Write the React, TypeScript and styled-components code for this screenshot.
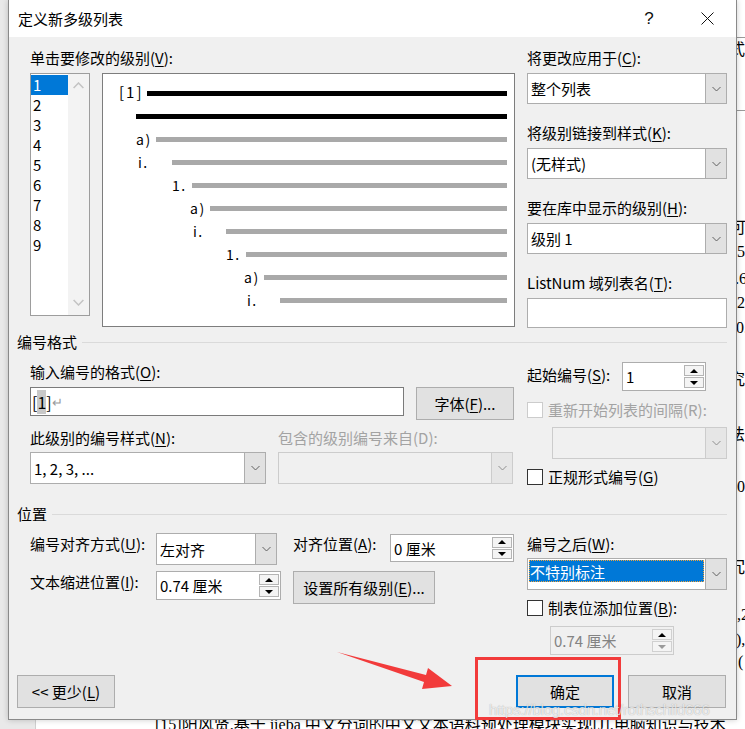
import React from "react";
import styled, { createGlobalStyle, css } from "styled-components";

const UI_FONT = `"Noto Sans CJK SC", "Noto Sans", sans-serif`;

const GlobalStyle = createGlobalStyle`
  html, body {
    margin: 0;
    padding: 0;
    background: #fff;
  }
  body {
    font-family: ${UI_FONT};
  }
`;

const Screen = styled.div`
  position: relative;
  width: 745px;
  height: 729px;
  overflow: hidden;
  background: #fff;
`;

/* ---------- the Word document behind the dialog ---------- */

const Backdrop = styled.div`
  position: absolute;
  inset: 0;
  display: flex;
`;

const Gutter = styled.div`
  width: 35px;
  flex-shrink: 0;
  background: #e9e9e9;
  border-right: 1px solid #cfcfcf;
`;

const Page = styled.div`
  flex: 1;
  display: flex;
  flex-direction: column;
  font-family: "Liberation Serif", "Noto Sans CJK SC", serif;
  font-size: 16px;
  color: #000;
`;

const EdgeNotes = styled.div`
  flex: 1;
  display: flex;
  flex-direction: column;
`;

const EdgeNote = styled.div<{ $x: number; $gap: number }>`
  margin-left: ${(p) => p.$x - 36}px;
  margin-top: ${(p) => p.$gap}px;
  height: 20px;
  line-height: 20px;
  white-space: nowrap;
`;

const EdgeRule = styled.div<{ $gap: number }>`
  margin-top: ${(p) => p.$gap}px;
  height: 1px;
  background: #9a9a9a;
`;

const RefLine = styled.div`
  padding-left: 119px;
  height: 20px;
  line-height: 20px;
  margin-bottom: -6px;
  white-space: nowrap;
`;

/* ---------- dialog frame ---------- */

const Dialog = styled.div`
  position: absolute;
  left: 8px;
  top: 0;
  width: 729px;
  height: 720px;
  box-sizing: border-box;
  border: 1px solid #8a8a8a;
  border-top: none;
  background: #f0f0f0;
  display: flex;
  flex-direction: column;
  box-shadow: 0 0 6px rgba(0, 0, 0, 0.2);
  color: #000;
  font-size: 15px;
`;

const TitleBar = styled.div`
  height: 37px;
  background: #fff;
  display: flex;
  align-items: center;
`;

const Title = styled.div`
  flex: 1;
  padding-left: 9px;
  font-size: 15px;
  line-height: 20px;
`;

const CaptionButton = styled.div`
  width: 58px;
  height: 37px;
  display: flex;
  align-items: center;
  justify-content: center;
  font-family: "Liberation Sans", sans-serif;
  font-size: 17px;
  color: #111;
`;

const Body = styled.div`
  flex: 1;
  display: flex;
  flex-direction: column;
  padding: 0 9px 11px 8px;
`;

/* ---------- generic controls ---------- */

const Label = styled.div<{ $disabled?: boolean; $mt?: number; $w?: number }>`
  height: 20px;
  line-height: 20px;
  font-size: 15px;
  white-space: nowrap;
  color: ${(p) => (p.$disabled ? "#a3a3a3" : "#000")};
  margin-top: ${(p) => p.$mt ?? 0}px;
  ${(p) => p.$w && css`width: ${p.$w}px; flex-shrink: 0;`}
`;

const Key = styled.span`
  text-decoration: underline;
  text-underline-offset: 2px;
  text-decoration-thickness: 1px;
`;

const Stack = styled.div<{ $w?: number; $gap?: number; $mt?: number }>`
  display: flex;
  flex-direction: column;
  gap: ${(p) => p.$gap ?? 0}px;
  margin-top: ${(p) => p.$mt ?? 0}px;
  ${(p) => p.$w && css`width: ${p.$w}px; flex-shrink: 0;`}
`;

const Row = styled.div<{ $gap?: number; $mt?: number; $align?: string }>`
  display: flex;
  align-items: ${(p) => p.$align ?? "flex-start"};
  gap: ${(p) => p.$gap ?? 0}px;
  margin-top: ${(p) => p.$mt ?? 0}px;
`;

const ComboBox = styled.div<{
  $w: number;
  $h: number;
  $disabled?: boolean;
  $mt?: number;
  $ml?: number;
}>`
  display: flex;
  box-sizing: border-box;
  width: ${(p) => p.$w}px;
  height: ${(p) => p.$h}px;
  flex-shrink: 0;
  margin-top: ${(p) => p.$mt ?? 0}px;
  margin-left: ${(p) => p.$ml ?? 0}px;
  border: 1px solid ${(p) => (p.$disabled ? "#cccccc" : "#adadad")};
  background: ${(p) => (p.$disabled ? "#f0f0f0" : "#fff")};
`;

const ComboValue = styled.div<{ $selected?: boolean }>`
  flex: 1;
  display: flex;
  align-items: center;
  padding-left: 3px;
  font-size: 15px;
  white-space: nowrap;
  ${(p) =>
    p.$selected &&
    css`
      align-self: flex-start;
      height: 22px;
      margin: 1px 1px 0 1px;
      padding-left: 1px;
      background: #0078d7;
      color: #fff;
      outline: 1px dotted #f3a43a;
      outline-offset: -1px;
    `}
`;

const DropButton = styled.div<{ $disabled?: boolean }>`
  width: 20px;
  display: flex;
  align-items: center;
  justify-content: center;
  background: ${(p) => (p.$disabled ? "#e6e6e6" : "#e1e1e1")};
  border-left: 1px solid ${(p) => (p.$disabled ? "#cccccc" : "#adadad")};
`;

const TextBox = styled.div<{ $w: number; $h: number; $dark?: boolean }>`
  box-sizing: border-box;
  width: ${(p) => p.$w}px;
  height: ${(p) => p.$h}px;
  flex-shrink: 0;
  background: #fff;
  border: 1px solid ${(p) => (p.$dark ? "#7a7a7a" : "#adadad")};
  display: flex;
  align-items: center;
  padding-left: 1px;
  font-size: 16px;
`;

const Mark = styled.span`
  background: #c8c8c8;
`;

const ReturnMark = styled.span`
  color: #9a9a9a;
  font-size: 13px;
`;

const SpinBox = styled.div<{
  $w: number;
  $h: number;
  $disabled?: boolean;
  $mt?: number;
  $ml?: number;
}>`
  display: flex;
  box-sizing: border-box;
  width: ${(p) => p.$w}px;
  height: ${(p) => p.$h}px;
  flex-shrink: 0;
  margin-top: ${(p) => p.$mt ?? 0}px;
  margin-left: ${(p) => p.$ml ?? 0}px;
  border: 1px solid ${(p) => (p.$disabled ? "#cccccc" : "#adadad")};
  background: ${(p) => (p.$disabled ? "#f0f0f0" : "#fff")};
`;

const SpinValue = styled.div<{ $disabled?: boolean }>`
  flex: 1;
  display: flex;
  align-items: center;
  padding-left: 3px;
  font-size: 15px;
  white-space: nowrap;
  color: ${(p) => (p.$disabled ? "#838383" : "#000")};
`;

const SpinButtons = styled.div`
  width: 20px;
  display: flex;
  flex-direction: column;
  gap: 1px;
  padding: 2px 1px 2px 0;
`;

const SpinButton = styled.div<{ $disabled?: boolean }>`
  flex: 1;
  display: flex;
  align-items: center;
  justify-content: center;
  box-sizing: border-box;
  background: #f4f4f4;
  border: 1px solid ${(p) => (p.$disabled ? "#d0d0d0" : "#b4b4b4")};
`;

const PushButton = styled.button<{ $w: number; $primary?: boolean; $ml?: number }>`
  box-sizing: border-box;
  width: ${(p) => p.$w}px;
  height: 33px;
  flex-shrink: 0;
  margin: 0 0 0 ${(p) => p.$ml ?? 0}px;
  padding: 0;
  font-family: ${UI_FONT};
  font-size: 15px;
  color: #000;
  background: #e1e1e1;
  border: ${(p) => (p.$primary ? "2px solid #0078d7" : "1px solid #adadad")};
  display: flex;
  align-items: center;
  justify-content: center;
  white-space: nowrap;
`;

const CheckRow = styled.div<{ $mt?: number }>`
  display: flex;
  align-items: center;
  gap: 5px;
  height: 20px;
  margin-top: ${(p) => p.$mt ?? 0}px;
`;

const CheckBox = styled.span<{ $disabled?: boolean }>`
  width: 16px;
  height: 16px;
  box-sizing: border-box;
  flex-shrink: 0;
  background: #fff;
  border: 1px solid ${(p) => (p.$disabled ? "#cccccc" : "#333")};
`;

const GroupHeader = styled.div<{ $mt: number }>`
  display: flex;
  align-items: center;
  gap: 5px;
  height: 20px;
  line-height: 20px;
  margin-top: ${(p) => p.$mt}px;
  font-size: 15px;
  &::after {
    content: "";
    flex: 1;
    height: 1px;
    background: #dadada;
  }
`;

const Section = styled.div<{ $mt: number }>`
  display: flex;
  justify-content: space-between;
  margin-top: ${(p) => p.$mt}px;
  padding-left: 13px;
`;

/* ---------- level list and preview ---------- */

const LevelList = styled.div`
  box-sizing: border-box;
  width: 60px;
  height: 243px;
  flex-shrink: 0;
  border: 1px solid #9d9d9d;
  background: #fff;
  display: flex;
`;

const LevelItems = styled.div`
  flex: 1;
  padding-top: 1px;
`;

const LevelItem = styled.div<{ $selected?: boolean }>`
  height: 20px;
  line-height: 20px;
  padding-left: 2px;
  font-size: 15px;
  background: ${(p) => (p.$selected ? "#0078d7" : "transparent")};
  color: ${(p) => (p.$selected ? "#fff" : "#000")};
`;

const ListScroll = styled.div`
  width: 21px;
  background: #f3f3f3;
  display: flex;
  flex-direction: column;
  justify-content: space-between;
  align-items: center;
  padding: 8px 0 9px;
`;

const Preview = styled.div`
  box-sizing: border-box;
  width: 413px;
  height: 254px;
  flex-shrink: 0;
  border: 1px solid #7d7d7d;
  background: #fff;
  padding: 8px 7px 0 0;
`;

const PreviewRow = styled.div<{ $indent: number }>`
  display: flex;
  align-items: center;
  height: 23px;
  padding-left: ${(p) => p.$indent}px;
`;

const PreviewNum = styled.span<{ $w: number; $top?: boolean }>`
  width: ${(p) => p.$w}px;
  flex-shrink: 0;
  font-size: ${(p) => (p.$top ? 15 : 14)}px;
  letter-spacing: ${(p) => (p.$top ? 2 : 1.5)}px;
  color: #000;
  line-height: 16px;
  margin-top: ${(p) => (p.$top ? -4 : -2)}px;
  white-space: nowrap;
`;

const PreviewBar = styled.span<{ $strong?: boolean }>`
  flex: 1;
  height: 5px;
  background: ${(p) => (p.$strong ? "#000" : "#a9a9a9")};
`;

const Footer = styled.div`
  margin-top: auto;
  display: flex;
  justify-content: space-between;
  padding-right: 1px;
`;

/* ---------- overlays added to the screenshot ---------- */

const Highlight = styled.div`
  position: absolute;
  left: 475px;
  top: 657px;
  width: 146px;
  height: 63px;
  box-sizing: border-box;
  border: 3px solid #f23b3b;
`;

const Annotation = styled.svg`
  position: absolute;
  inset: 0;
  pointer-events: none;
`;

const Watermark = styled.div`
  position: absolute;
  left: 489px;
  top: 701px;
  font-family: "Liberation Sans", sans-serif;
  font-size: 15px;
  line-height: 18px;
  letter-spacing: -0.2px;
  color: rgba(255, 255, 255, 0.75);
  text-shadow: 0 0 1px rgba(0, 0, 0, 0.35);
  white-space: nowrap;
`;

/* ---------- glyphs ---------- */

const Chevron = ({ up, color = "#606060", size = 9 }: { up?: boolean; color?: string; size?: number }) => (
  <svg width={size} height={Math.round(size / 2) + 1} viewBox="0 0 9 5">
    <polyline
      points={up ? "0.5,4.5 4.5,0.5 8.5,4.5" : "0.5,0.5 4.5,4.5 8.5,0.5"}
      fill="none"
      stroke={color}
      strokeWidth={size > 9 ? 1.3 : 1}
    />
  </svg>
);

const Triangle = ({ down, color = "#000" }: { down?: boolean; color?: string }) => (
  <svg width="8" height="4" viewBox="0 0 8 4">
    <polygon points={down ? "0,0 8,0 4,4" : "0,4 8,4 4,0"} fill={color} />
  </svg>
);

const CloseIcon = () => (
  <svg width="13" height="13" viewBox="0 0 13 13">
    <path d="M0.5 0.5 L12.5 12.5 M12.5 0.5 L0.5 12.5" stroke="#111" strokeWidth="1" />
  </svg>
);

/* ---------- small compositions ---------- */

const Combo = ({
  value,
  w,
  h = 32,
  disabled,
  selected,
  mt,
  ml,
}: {
  value?: string;
  w: number;
  h?: number;
  disabled?: boolean;
  selected?: boolean;
  mt?: number;
  ml?: number;
}) => (
  <ComboBox $w={w} $h={h} $disabled={disabled} $mt={mt} $ml={ml}>
    <ComboValue $selected={selected}>{value}</ComboValue>
    <DropButton $disabled={disabled}>
      <Chevron color={disabled ? "#8f8f8f" : "#606060"} />
    </DropButton>
  </ComboBox>
);

const Spinner = ({
  value,
  w,
  h = 29,
  disabled,
  mt,
  ml,
}: {
  value: string;
  w: number;
  h?: number;
  disabled?: boolean;
  mt?: number;
  ml?: number;
}) => (
  <SpinBox $w={w} $h={h} $disabled={disabled} $mt={mt} $ml={ml}>
    <SpinValue $disabled={disabled}>{value}</SpinValue>
    <SpinButtons>
      <SpinButton $disabled={disabled}>
        <Triangle />
      </SpinButton>
      <SpinButton $disabled={disabled}>
        <Triangle down color={disabled ? "#9a9a9a" : "#000"} />
      </SpinButton>
    </SpinButtons>
  </SpinBox>
);

const levels = ["1", "2", "3", "4", "5", "6", "7", "8", "9"];

// x positions are screen pixels taken from Word's preview
const previewRows = [
  { label: "[1]", x: 119, line: 147, strong: true },
  { label: "", x: 136, line: 136, strong: true },
  { label: "a)", x: 136, line: 156 },
  { label: "i.", x: 138, line: 172 },
  { label: "1.", x: 172, line: 192 },
  { label: "a)", x: 190, line: 210 },
  { label: "i.", x: 193, line: 226 },
  { label: "1.", x: 226, line: 246 },
  { label: "a)", x: 244, line: 264 },
  { label: "i.", x: 247, line: 280 },
];

const edgeItems: { y: number; x?: number; text?: string }[] = [
  { y: 37 },
  { y: 50, x: 729, text: "式" },
  { y: 110 },
  { y: 228, x: 730, text: "可" },
  { y: 252, x: 737, text: "5)" },
  { y: 279, x: 735, text: ".6" },
  { y: 303, x: 737, text: "2" },
  { y: 328, x: 736, text: "0." },
  { y: 380, x: 729, text: "究" },
  { y: 435, x: 729, text: "法" },
  { y: 487, x: 737, text: "0" },
  { y: 568, x: 729, text: "冗" },
  { y: 615, x: 737, text: ",2" },
  { y: 640, x: 736, text: ")," },
  { y: 662, x: 738, text: "(" },
];

const EdgeColumn = () => {
  let bottom = 0;
  return (
    <EdgeNotes>
      {edgeItems.map((item, i) => {
        if (!item.text) {
          const gap = item.y - bottom;
          bottom = item.y + 1;
          return <EdgeRule key={i} $gap={gap} />;
        }
        const top = item.y - 10;
        const gap = top - bottom;
        bottom = top + 20;
        return (
          <EdgeNote key={i} $x={item.x ?? 729} $gap={gap}>
            {item.text}
          </EdgeNote>
        );
      })}
    </EdgeNotes>
  );
};

export default function App() {
  return (
    <>
      <GlobalStyle />
      <Screen>
        <Backdrop>
          <Gutter />
          <Page>
            <EdgeColumn />
            <RefLine>[15]阳风贤.基于 jieba 中文分词的中文文本语料预处理模块实现[J].电脑知识与技术</RefLine>
          </Page>
        </Backdrop>

        <Dialog>
          <TitleBar>
            <Title>定义新多级列表</Title>
            <CaptionButton>?</CaptionButton>
            <CaptionButton>
              <CloseIcon />
            </CaptionButton>
          </TitleBar>

          <Body>
            <Section $mt={11}>
              <Stack $w={485}>
                <Label>
                  单击要修改的级别(<Key>V</Key>):
                </Label>
                <Row $gap={12} $mt={5}>
                  <LevelList>
                    <LevelItems>
                      {levels.map((n, i) => (
                        <LevelItem key={n} $selected={i === 0}>
                          {n}
                        </LevelItem>
                      ))}
                    </LevelItems>
                    <ListScroll>
                      <Chevron up size={11} color="#c4c4c4" />
                      <Chevron size={11} color="#c4c4c4" />
                    </ListScroll>
                  </LevelList>
                  <Preview>
                    {previewRows.map((r, i) => (
                      <PreviewRow key={i} $indent={r.x - 103}>
                        {r.label && (
                          <PreviewNum $w={r.line - r.x} $top={i === 0}>
                            {r.label}
                          </PreviewNum>
                        )}
                        <PreviewBar $strong={r.strong} />
                      </PreviewRow>
                    ))}
                  </Preview>
                </Row>
              </Stack>

              <Stack $w={200} $gap={19}>
                <Stack $gap={5}>
                  <Label>
                    将更改应用于(<Key>C</Key>):
                  </Label>
                  <Combo value="整个列表" w={200} h={31} />
                </Stack>
                <Stack $gap={5}>
                  <Label>
                    将级别链接到样式(<Key>K</Key>):
                  </Label>
                  <Combo value="(无样式)" w={200} h={31} />
                </Stack>
                <Stack $gap={5}>
                  <Label>
                    要在库中显示的级别(<Key>H</Key>):
                  </Label>
                  <Combo value="级别 1" w={200} h={31} />
                </Stack>
                <Stack $gap={5}>
                  <Label>
                    ListNum 域列表名(<Key>T</Key>):
                  </Label>
                  <TextBox $w={200} $h={30} />
                </Stack>
              </Stack>
            </Section>

            <GroupHeader $mt={4}>编号格式</GroupHeader>

            <Section $mt={10}>
              <Stack $w={485}>
                <Label>
                  输入编号的格式(<Key>O</Key>):
                </Label>
                <Row $gap={12} $mt={5}>
                  <TextBox $w={374} $h={29} $dark>
                    [<Mark>1</Mark>]<ReturnMark>↵</ReturnMark>
                  </TextBox>
                  <PushButton $w={98}>
                    字体(<Key>F</Key>)...
                  </PushButton>
                </Row>
                <Row $mt={8}>
                  <Label $w={248}>
                    此级别的编号样式(<Key>N</Key>):
                  </Label>
                  <Label $disabled>包含的级别编号来自(D):</Label>
                </Row>
                <Row $gap={12} $mt={4}>
                  <Combo value="1, 2, 3, ..." w={236} />
                  <Combo w={235} disabled />
                </Row>
              </Stack>

              <Stack $w={200}>
                <Row $align="center">
                  <Label $w={95} $mt={-4}>
                    起始编号(<Key>S</Key>):
                  </Label>
                  <Spinner value="1" w={84} />
                </Row>
                <CheckRow $mt={9}>
                  <CheckBox $disabled />
                  <Label $disabled>重新开始列表的间隔(R):</Label>
                </CheckRow>
                <Combo w={175} disabled mt={7} ml={25} />
                <CheckRow $mt={8}>
                  <CheckBox />
                  <Label>
                    正规形式编号(<Key>G</Key>)
                  </Label>
                </CheckRow>
              </Stack>
            </Section>

            <GroupHeader $mt={17}>位置</GroupHeader>

            <Section $mt={9}>
              <Stack $w={485}>
                <Row>
                  <Label $w={126} $mt={1}>
                    编号对齐方式(<Key>U</Key>):
                  </Label>
                  <Combo value="左对齐" w={121} />
                  <Label $w={97} $mt={1} style={{ marginLeft: 16 }}>
                    对齐位置(<Key>A</Key>):
                  </Label>
                  <Spinner value="0 厘米" w={124} h={28} mt={1} />
                </Row>
                <Row $mt={6}>
                  <Label $w={126} $mt={1}>
                    文本缩进位置(<Key>I</Key>):
                  </Label>
                  <Spinner value="0.74 厘米" w={125} />
                  <PushButton $w={142} $ml={12}>
                    设置所有级别(<Key>E</Key>)...
                  </PushButton>
                </Row>
              </Stack>

              <Stack $w={200}>
                <Label $mt={1}>
                  编号之后(<Key>W</Key>):
                </Label>
                <Combo value="不特别标注" w={200} selected mt={4} />
                <CheckRow $mt={8}>
                  <CheckBox />
                  <Label>
                    制表位添加位置(<Key>B</Key>):
                  </Label>
                </CheckRow>
                <Spinner value="0.74 厘米" w={124} disabled mt={8} ml={23} />
              </Stack>
            </Section>

            <Footer>
              <PushButton $w={98}>
                &lt;&lt; 更少(<Key>L</Key>)
              </PushButton>
              <Row $gap={14}>
                <PushButton $w={98} $primary>
                  确定
                </PushButton>
                <PushButton $w={98}>取消</PushButton>
              </Row>
            </Footer>
          </Body>
        </Dialog>

        <Highlight />
        <Annotation width="745" height="729" viewBox="0 0 745 729">
          <polygon
            points="337,652 426,675 428,668 452,686 422,689 424,682"
            fill="#f23b3b"
          />
        </Annotation>
        <Watermark>https://blog.csdn.net/rothschild666</Watermark>
      </Screen>
    </>
  );
}
